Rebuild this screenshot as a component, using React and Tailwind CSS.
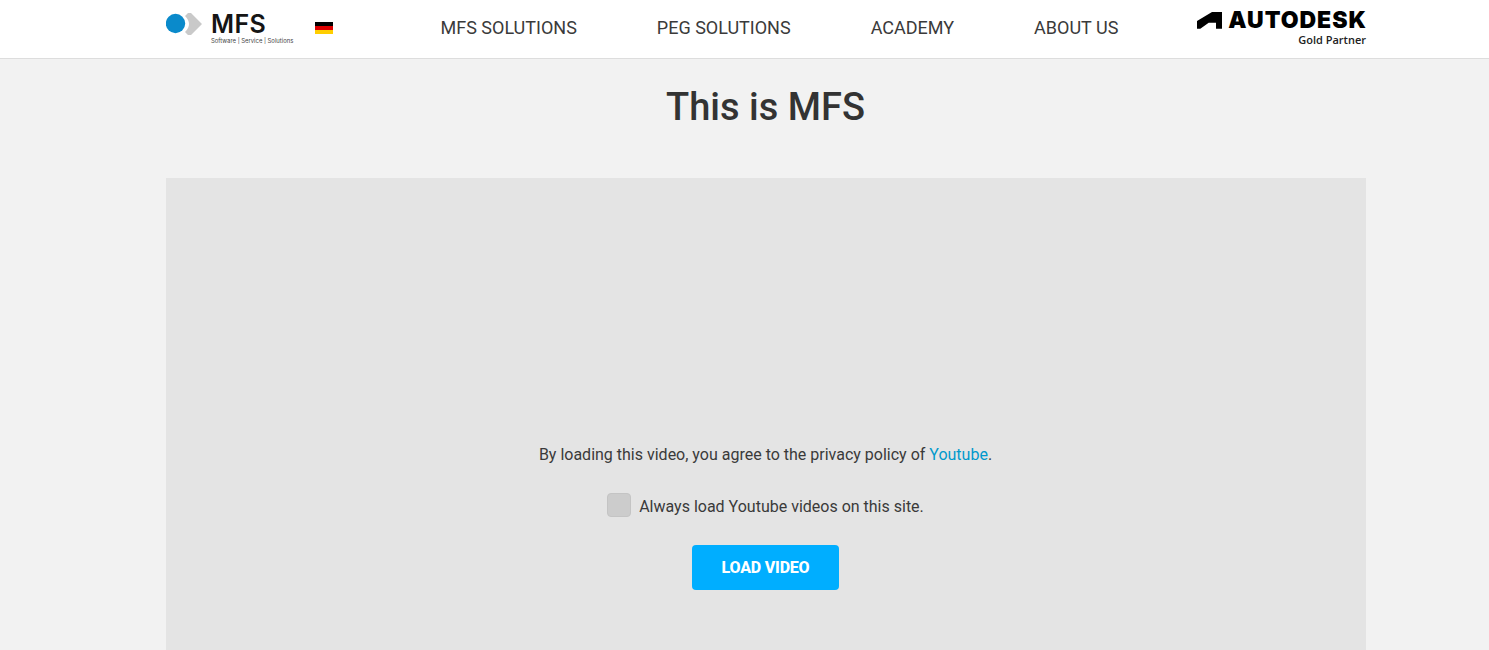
export default function App() {
  const font = { fontFamily: 'Roboto, sans-serif' };
  return (
    <div style={font} className="h-[650px] overflow-hidden bg-[#f2f2f2] text-[#333333]">
      <header className="h-[59px] bg-white border-b border-[#dddddd]">
        <div className="ml-[166px] w-[1200px] h-[58px] flex items-center">
          <div className="w-[128px] h-[58px] flex items-start shrink-0">
            <svg width="36" height="24" viewBox="0 0 36 24" className="mt-[12px] shrink-0">
              <path d="M22 1 L25 1 L36 12 L25 23 L22 23 L19 20 Q23 16 23 12 Q23 8 19 4 Z" fill="#c9c9c9" />
              <circle cx="9.5" cy="11.5" r="9.7" fill="#0a8acb" />
            </svg>
            <div className="ml-[9px] mt-[14px] flex flex-col shrink-0">
              <span style={{ fontFamily: 'Inter, sans-serif' }} className="text-[25px] leading-[20px] font-semibold text-[#151515] tracking-[0.4px]">MFS</span>
              <span style={{ fontFamily: 'Inter, sans-serif' }} className="text-[5.9px] leading-[8px] mt-[3px] text-[#444444] whitespace-nowrap">Software | Service | Solutions</span>
            </div>
          </div>
          <div className="ml-[21px] w-[18px] h-[12px] flex flex-col shrink-0 mt-[-3px]">
            <div className="h-[4px] bg-black" />
            <div className="h-[4px] bg-[#dd0000]" />
            <div className="h-[4px] bg-[#ffce00]" />
          </div>
          <nav className="ml-[107.5px] mb-[3px] flex gap-[80px] text-[18px] text-[#3a3a3a] whitespace-nowrap">
            <span>MFS SOLUTIONS</span>
            <span>PEG SOLUTIONS</span>
            <span>ACADEMY</span>
            <span>ABOUT US</span>
          </nav>
          <div className="ml-auto flex flex-col items-end self-start mt-[8px]">
            <div className="flex items-center gap-[6px] mr-[-1px]">
              <svg width="25" height="17" viewBox="0 0 25 17" className="shrink-0">
                <path d="M0 9 L15 0 L25 0 L25 16.7 L19 16.7 L19 10.7 L11.7 10.7 L3.3 16.7 L0 16.7 Z" fill="#000" />
              </svg>
              <span style={{ fontFamily: 'Inter, sans-serif' }} className="text-[23px] leading-[24px] font-black text-black tracking-[1px]">AUTODESK</span>
            </div>
            <span style={{ fontFamily: '"Open Sans", sans-serif' }} className="text-[11px] leading-[14px] font-semibold text-[#222222] mt-[1px]">Gold Partner</span>
          </div>
        </div>
      </header>
      <main className="ml-[166px] w-[1200px]">
        <h1 className="text-[38px] leading-[46px] font-medium text-center mt-[25px] pr-[1px] text-[#333333]">This is MFS</h1>
        <section className="mt-[48px] bg-[#e4e4e4] h-[700px] flex flex-col items-center pt-[265px] pr-[1px] text-[#3a3a3a]">
          <p className="text-[16px] leading-[24px]">
            By loading this video, you agree to the privacy policy of <a className="text-[#0099cc]">Youtube</a>.
          </p>
          <label className="mt-[24px] flex items-center gap-[8px]">
            <span className="w-[24px] h-[24px] rounded-[4px] bg-[#cccccc] border border-[#c4c4c4]" />
            <span className="text-[16px] leading-[24px] mt-[4px]">Always load Youtube videos on this site.</span>
          </label>
          <button className="mt-[26px] w-[147px] h-[45px] rounded-[4px] bg-[#00aeff] text-white font-extrabold text-[16px] tracking-[-0.2px]">LOAD VIDEO</button>
        </section>
      </main>
    </div>
  );
}
